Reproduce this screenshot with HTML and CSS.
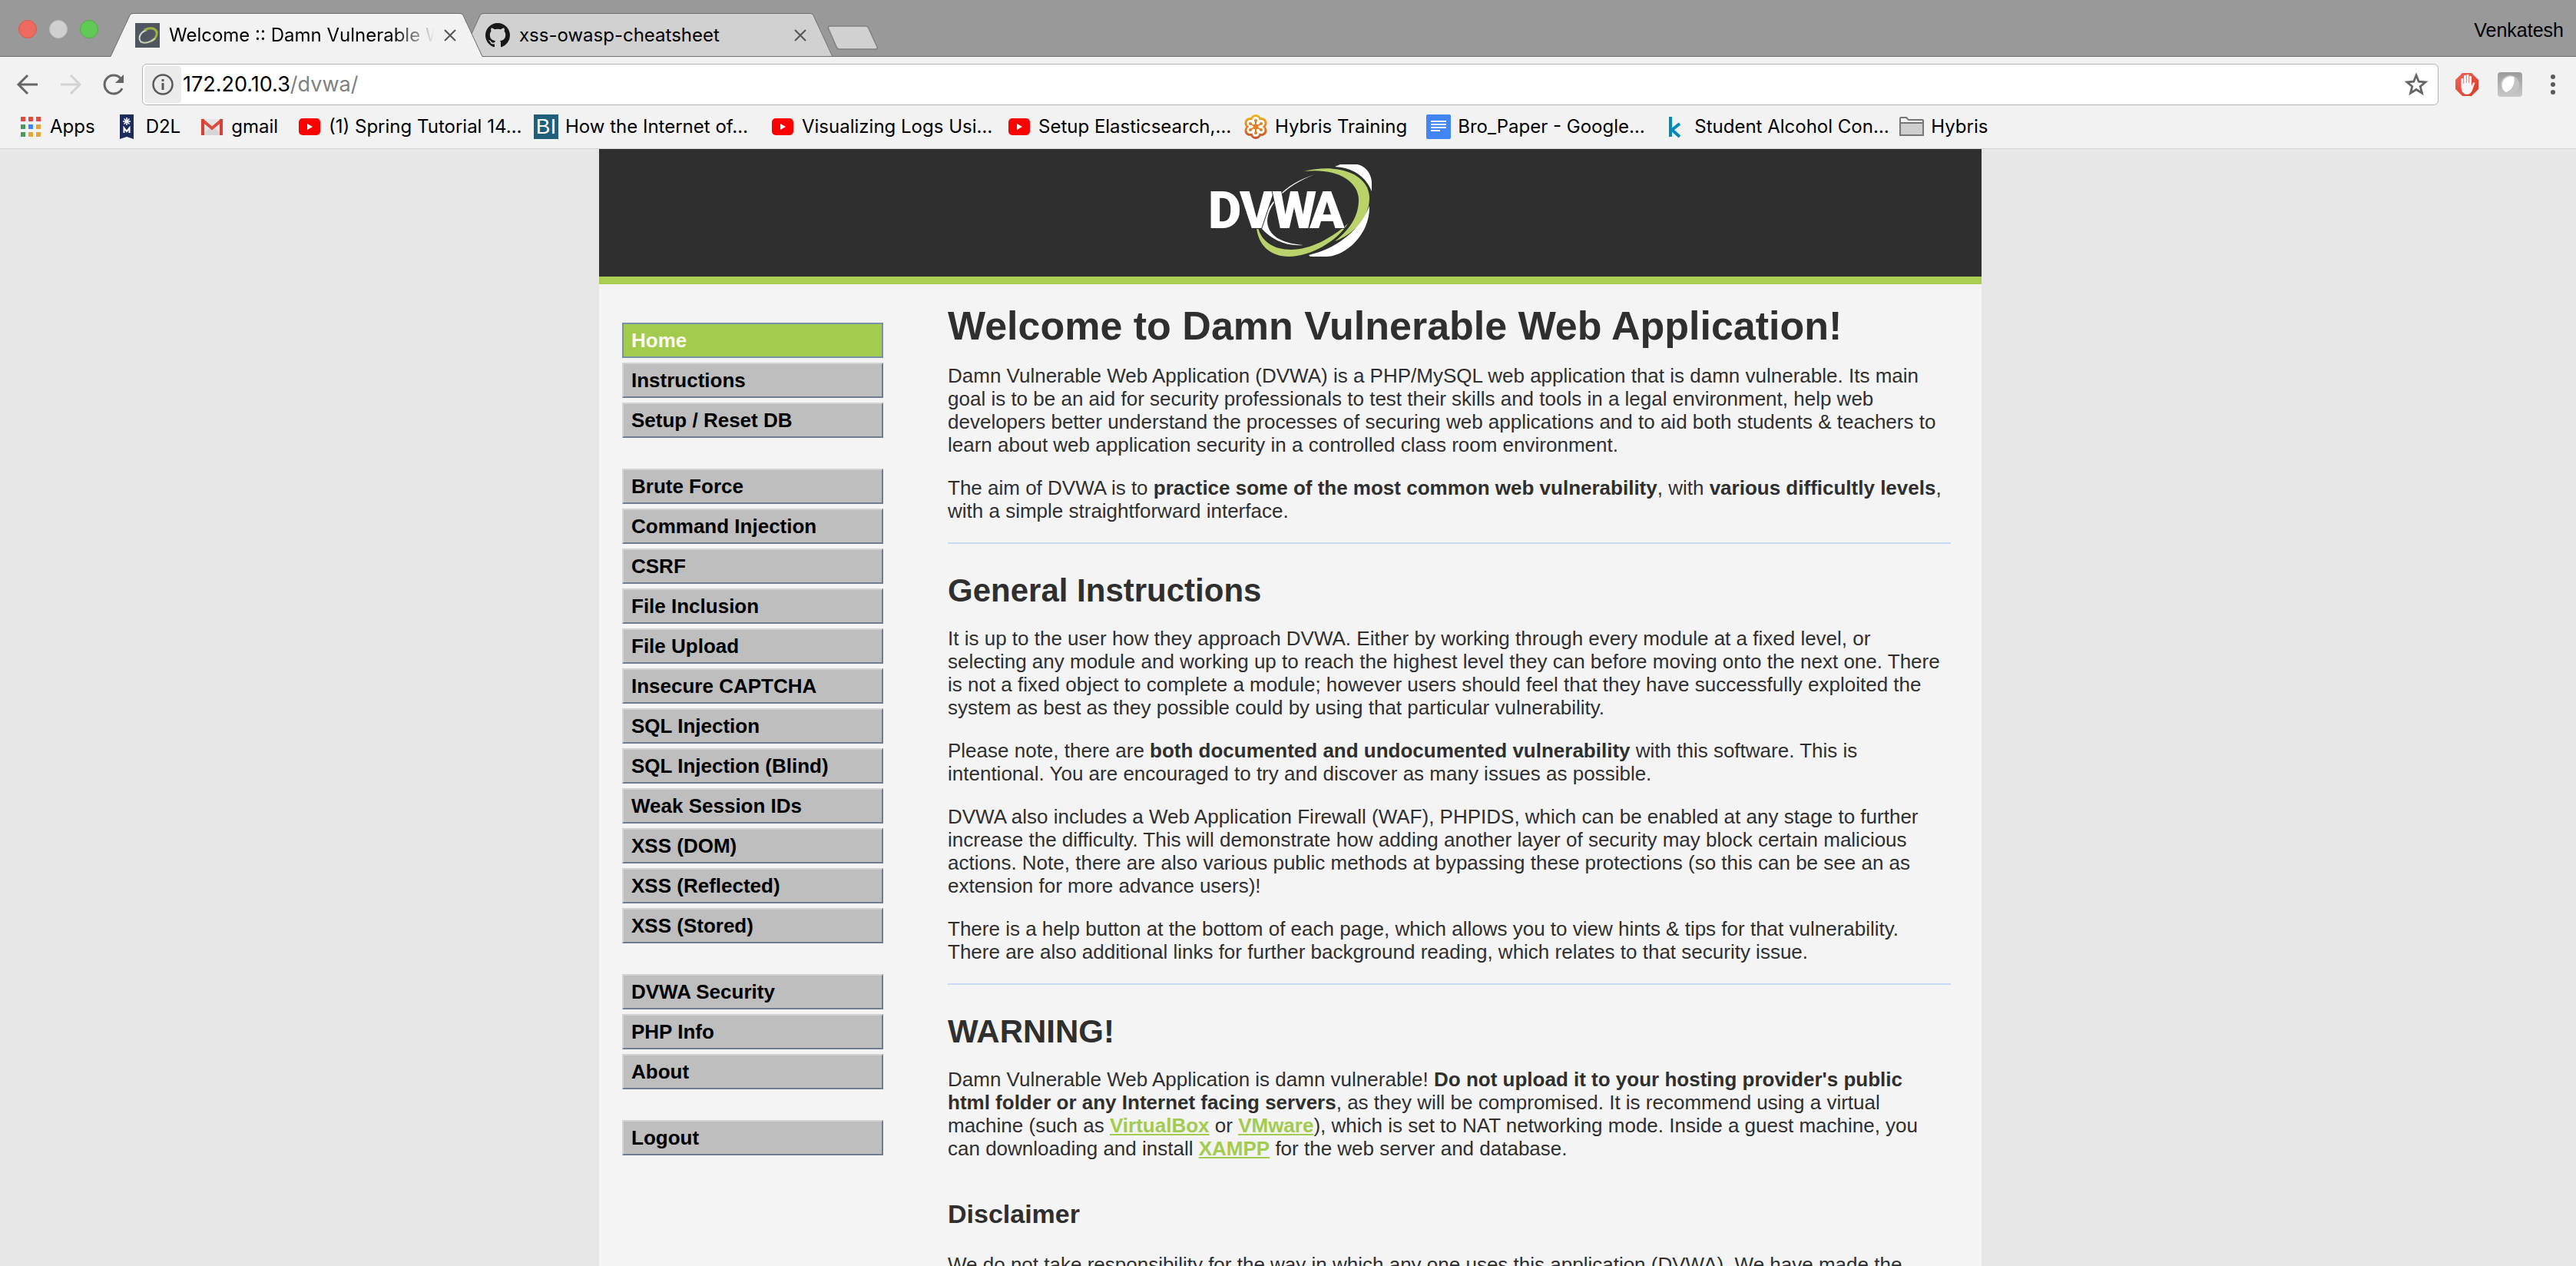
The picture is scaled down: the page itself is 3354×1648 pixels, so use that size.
FILE: index.html
```html
<!DOCTYPE html>
<html lang="en">
<head>
<meta charset="utf-8">
<title>Welcome :: Damn Vulnerable Web Application</title>
<link rel="stylesheet" href="styles.css">
</head>
<body>
<svg class="defs" aria-hidden="true">
  <defs>
    <symbol id="close" viewBox="0 0 16 16"><path d="M1 1L15 15M15 1L1 15" stroke="#555" stroke-width="2" fill="none"/></symbol>
    <symbol id="youtube" viewBox="0 0 32 32"><rect x="2" y="5" width="28" height="22" rx="5" fill="#f00"/><path d="M13 12L20 16L13 20Z" fill="#fff"/></symbol>
    <linearGradient id="orange" x1="0" y1="0" x2="0" y2="32" gradientUnits="userSpaceOnUse"><stop offset="0" stop-color="#f0b51e"/><stop offset="1" stop-color="#c8502d"/></linearGradient>
    <linearGradient id="red" x1="0" y1="0" x2="1" y2="1"><stop offset="0" stop-color="#f0655a"/><stop offset="1" stop-color="#d63a25"/></linearGradient>
    <linearGradient id="grey" x1="0" y1="0" x2="0" y2="1"><stop offset="0" stop-color="#9a9a9a"/><stop offset="1" stop-color="#c9c9c9"/></linearGradient>
  </defs>
</svg>

<header class="chrome">
  <div class="tabstrip">
    <div class="lights"><span class="light red"></span><span class="light idle"></span><span class="light green"></span></div>
    <div class="tab active">
      <svg class="tab-shape" viewBox="0 0 484 57"><path d="M0 57L25 3Q26 1 29 1H455Q458 1 459 3L484 57Z" fill="#f2f2f2"/><path d="M0 56.500L25 3Q26 .5 29 .5H455Q458 .5 459 3L484 56.500" fill="none" stroke="#6f6f6f"/></svg>
      <svg class="icon" viewBox="0 0 32 32"><rect width="32" height="32" fill="#50565f"/><path d="M8 25C3 20 6 12 15 9" fill="none" stroke="#d8dbd4" stroke-width="2"/><path d="M12 9C22 4 29 8 28 15C27 19 24 22 21 23" fill="none" stroke="#9cb045" stroke-width="3"/><path d="M7 24C12 28 22 24 26 20" fill="none" stroke="#c6cfae" stroke-width="2"/></svg>
      <span class="tab-title fade">Welcome :: Damn Vulnerable Web</span>
      <button class="tab-close" aria-label="Close tab"><svg width="16" height="16"><use href="#close"/></svg></button>
    </div>
    <div class="tab">
      <svg class="tab-shape" viewBox="0 0 484 57"><path d="M14 27L25 3Q26 1 29 1H455Q458 1 459 3L484 56H28Z" fill="#d1d1d1"/><path d="M14 27L25 3Q26 .5 29 .5H455Q458 .5 459 3L484 57" fill="none" stroke="#6f6f6f"/></svg>
      <svg class="icon" viewBox="0 0 16 16"><path fill="#191717" d="M8 0C3.580 0 0 3.580 0 8c0 3.540 2.290 6.530 5.470 7.590.4.070.55-.17.55-.38 0-.19-.01-.82-.01-1.490-2.010.37-2.530-.49-2.690-.94-.09-.23-.48-.94-.82-1.130-.28-.15-.68-.52-.01-.53.63-.01 1.080.58 1.230.82.72 1.210 1.870.87 2.330.66.070-.52.28-.87.51-1.070-1.780-.2-3.640-.89-3.640-3.950 0-.87.31-1.590.82-2.150-.08-.2-.36-1.020.08-2.120 0 0 .67-.21 2.200.82a7.600 7.600 0 0 1 4 0c1.530-1.040 2.200-.82 2.200-.82.44 1.100.16 1.920.08 2.120.51.56.82 1.270.82 2.150 0 3.070-1.870 3.750-3.650 3.950.29.25.54.73.54 1.480 0 1.070-.01 1.930-.01 2.200 0 .21.15.46.55.38A8 8 0 0 0 16 8c0-4.420-3.580-8-8-8z"/></svg>
      <span class="tab-title">xss-owasp-cheatsheet</span>
      <button class="tab-close" aria-label="Close tab"><svg width="16" height="16"><use href="#close"/></svg></button>
    </div>
    <button class="new-tab" aria-label="New tab"><svg width="68" height="34" viewBox="0 0 68 34"><path d="M4 1H50Q53 1 54 4L65 28Q66 31 63 31H16Q13 31 12 28L2 5Q0 1 4 1Z" fill="#d1d1d1" stroke="#808080" stroke-width="1.500"/></svg></button>
    <span class="profile">Venkatesh</span>
  </div>

  <div class="toolbar">
    <button class="tool" aria-label="Back"><svg width="32" height="32" viewBox="0 0 32 32"><path d="M29 16H5M16 4L4 16L16 28" fill="none" stroke="#666" stroke-width="3"/></svg></button>
    <button class="tool" aria-label="Forward"><svg width="32" height="32" viewBox="0 0 32 32"><path d="M3 16H27M16 4L28 16L16 28" fill="none" stroke="#d3d3d3" stroke-width="3"/></svg></button>
    <button class="tool" aria-label="Reload"><svg width="32" height="32" viewBox="0 0 32 32"><path d="M27 21A12 12 0 1 1 25 8" fill="none" stroke="#666" stroke-width="3"/><path d="M29 3V14H18Z" fill="#666"/></svg></button>
    <div class="omnibox">
      <span class="info"><svg width="30" height="30" viewBox="0 0 30 30"><circle cx="15" cy="15" r="12.500" fill="none" stroke="#5a5a5a" stroke-width="2.500"/><path d="M15 13V22M15 8V11" stroke="#5a5a5a" stroke-width="3"/></svg></span>
      <span class="url">172.20.10.3<span class="path">/dvwa/</span></span>
      <button class="tool" aria-label="Bookmark this page"><svg width="32" height="32" viewBox="0 0 32 32"><path d="M16 4L19.300 12.200L28 12.800L21.300 18.500L23.500 27.200L16 22.500L8.500 27.200L10.700 18.500L4 12.800L12.700 12.200Z" fill="none" stroke="#666" stroke-width="2.800"/></svg></button>
    </div>
    <button class="tool" aria-label="Ad blocker"><svg width="32" height="32" viewBox="0 0 32 32"><path d="M10 1H22L31 10V22L22 31H10L1 22V10Z" fill="url(#red)"/><path d="M8.500 19V8.500Q10 7 11.500 8.500V15H12V4.500Q13.500 3 15 4.500V14H15.500V3.500Q17 2 18.500 3.500V14H19V5.500Q20.500 4 22 5.500V18L23.500 14.500Q25 12.500 26.500 13.500L23.500 22Q21.500 29 16 29Q8.500 28.500 8.500 19Z" fill="#f7f7f7"/><path d="M11.800 8V15M15.300 5V14M18.800 5V14" stroke="#e0897f" stroke-width=".8"/></svg></button>
    <button class="tool" aria-label="Extension"><svg width="32" height="32" viewBox="0 0 32 32"><rect width="32" height="32" rx="4" fill="url(#grey)"/><circle cx="16" cy="16" r="12" fill="#c4c4c4"/><path d="M6 20C4 10 12 4 21 6C24 14 18 24 11 26Q7 24 6 20Z" fill="#fff"/></svg></button>
    <button class="tool" aria-label="Menu"><svg width="32" height="32" viewBox="0 0 32 32"><circle cx="16" cy="6" r="3" fill="#5a5a5a"/><circle cx="16" cy="16" r="3" fill="#5a5a5a"/><circle cx="16" cy="26" r="3" fill="#5a5a5a"/></svg></button>
  </div>

  <nav class="bookmarks" aria-label="Bookmarks">
    <a href="#"><svg class="icon" viewBox="0 0 32 32"><path d="M3 3h6v6H3zM13 3h6v6h-6zM23 3h6v6h-6z" fill="#e04a3f"/><path d="M3 13h6v6H3zM3 23h6v6H3z" fill="#4c9a5b"/><path d="M13 13h6v6h-6z" fill="#4285f4"/><path d="M23 13h6v6h-6zM13 23h6v6h-6zM23 23h6v6h-6z" fill="#e5a53a"/></svg>Apps</a>
    <a href="#"><svg class="icon" viewBox="0 0 32 32"><path d="M7 0H25V32L16 29L7 32Z" fill="#1c2b5c"/><path d="M16 4V14M11 9H21M12.500 5.500L19.500 12.500M19.500 5.500L12.500 12.500" stroke="#fff" stroke-width="1.500"/><path d="M12.500 24V17.500L16 22L19.500 17.500V24" fill="none" stroke="#fff" stroke-width="2"/></svg>D2L</a>
    <a href="#"><svg class="icon" viewBox="0 0 32 32"><path d="M2 6H30V27H2Z" fill="#e6e6e6"/><path d="M2 27L16 15L30 27Z" fill="#d6d6d6"/><path d="M3 7L16 18L29 7" fill="none" stroke="#dd4b3e" stroke-width="4"/><path d="M2 6H6V27H2ZM26 6H30V27H26Z" fill="#d54235"/></svg>gmail</a>
    <a class="long" href="#"><svg class="icon"><use href="#youtube"/></svg>(1) Spring Tutorial 14…</a>
    <a class="long" href="#"><span class="icon bi">BI</span>How the Internet of…</a>
    <a class="long" href="#"><svg class="icon"><use href="#youtube"/></svg>Visualizing Logs Usi…</a>
    <a class="long" href="#"><svg class="icon"><use href="#youtube"/></svg>Setup Elasticsearch,…</a>
    <a href="#"><svg class="icon" viewBox="0 0 32 32"><g fill="url(#orange)"><circle cx="16" cy="7" r="7"/><circle cx="8.500" cy="11" r="7"/><circle cx="23.500" cy="11" r="7"/><circle cx="8.500" cy="21" r="7"/><circle cx="23.500" cy="21" r="7"/><circle cx="16" cy="25" r="7"/></g><g fill="#fff"><circle cx="16" cy="16" r="9"/><circle cx="16" cy="7.500" r="4.500"/><circle cx="9" cy="11.500" r="4.500"/><circle cx="23" cy="11.500" r="4.500"/><circle cx="9" cy="20.500" r="4.500"/><circle cx="23" cy="20.500" r="4.500"/><circle cx="16" cy="24.500" r="4.500"/></g><path d="M16 8V24M9 12L23 20M23 12L9 20" stroke="#df7e24" stroke-width="2"/><g fill="#df7e24"><circle cx="16" cy="16" r="3.500"/><circle cx="16" cy="8" r="2"/><circle cx="9" cy="12" r="2"/><circle cx="23" cy="12" r="2"/><circle cx="9" cy="20" r="2"/><circle cx="23" cy="20" r="2"/><circle cx="16" cy="24" r="2"/></g></svg>Hybris Training</a>
    <a class="long" href="#"><svg class="icon" viewBox="0 0 32 32"><rect width="32" height="32" rx="2" fill="#4285f4"/><path d="M6 9H26M6 13H26M6 17H26M6 21H18" stroke="#fff" stroke-width="2"/></svg>Bro_Paper - Google…</a>
    <a class="long" href="#"><svg class="icon" viewBox="0 0 32 32"><path d="M10 3V29M22 12L12 20L22 29" fill="none" stroke="#008abc" stroke-width="4"/></svg>Student Alcohol Con…</a>
    <a href="#"><svg class="icon" viewBox="0 0 32 32"><path d="M1 27V5Q1 4 2 4H9L12 7H30Q31 7 31 8V27Z" fill="#f2f2f2" stroke="#767676" stroke-width="2"/><path d="M1 11H31V27H1Z" fill="#cfcfcf" stroke="#767676" stroke-width="2"/></svg>Hybris</a>
  </nav>
</header>

<div class="viewport">
  <div class="container">
    <div class="banner">
      <svg class="logo" width="210" height="120" viewBox="0 0 210 120" role="img" aria-label="DVWA">
        <path fill="#fff" d="M136 13C100 24 72 50 66 83C80 98 98 107 121 105C92 103 74 92 74 73C76 50 98 28 136 13Z"/>
        <path fill="#b9d36a" d="M122 9C165 -2 207 12 207 44C207 70 185 92 162 100C185 82 193 64 193 46C193 22 165 4 122 9Z"/>
        <path fill="#b9d36a" d="M60 82C62 105 78 120 102 120C130 120 165 100 179 77C158 96 130 111 105 111C82 111 66 100 62 82Z"/>
        <path fill="#fff" d="M162 3L169 0H191C203 2 210 14 210 24V35C203 18 188 4 162 3Z"/>
        <path fill="#fff" d="M207 54C208 92 175 120 151 120H130L128 118C165 110 196 84 207 54Z"/>
        <text class="logo-text" y="83" x="-3 38 80 129">DVWA</text>
      </svg>
    </div>
    <div class="columns">
      <nav class="menu" aria-label="Main menu">
        <ul>
          <li><a class="selected" href="#">Home</a></li>
          <li><a href="#">Instructions</a></li>
          <li><a href="#">Setup / Reset DB</a></li>
        </ul>
        <ul>
          <li><a href="#">Brute Force</a></li>
          <li><a href="#">Command Injection</a></li>
          <li><a href="#">CSRF</a></li>
          <li><a href="#">File Inclusion</a></li>
          <li><a href="#">File Upload</a></li>
          <li><a href="#">Insecure CAPTCHA</a></li>
          <li><a href="#">SQL Injection</a></li>
          <li><a href="#">SQL Injection (Blind)</a></li>
          <li><a href="#">Weak Session IDs</a></li>
          <li><a href="#">XSS (DOM)</a></li>
          <li><a href="#">XSS (Reflected)</a></li>
          <li><a href="#">XSS (Stored)</a></li>
        </ul>
        <ul>
          <li><a href="#">DVWA Security</a></li>
          <li><a href="#">PHP Info</a></li>
          <li><a href="#">About</a></li>
        </ul>
        <ul>
          <li><a href="#">Logout</a></li>
        </ul>
      </nav>
      <main class="content">
        <h1>Welcome to Damn Vulnerable Web Application!</h1>
        <p>Damn Vulnerable Web Application (DVWA) is a PHP/MySQL web application that is damn vulnerable. Its main goal is to be an aid for security professionals to test their skills and tools in a legal environment, help web developers better understand the processes of securing web applications and to aid both students &amp; teachers to learn about web application security in a controlled class room environment.</p>
        <p>The aim of DVWA is to <strong>practice some of the most common web vulnerability</strong>, with <strong>various difficultly levels</strong>, with a simple straightforward interface.</p>
        <hr>
        <h2>General Instructions</h2>
        <p>It is up to the user how they approach DVWA. Either by working through every module at a fixed level, or selecting any module and working up to reach the highest level they can before moving onto the next one. There is not a fixed object to complete a module; however users should feel that they have successfully exploited the system as best as they possible could by using that particular vulnerability.</p>
        <p>Please note, there are <strong>both documented and undocumented vulnerability</strong> with this software. This is intentional. You are encouraged to try and discover as many issues as possible.</p>
        <p>DVWA also includes a Web Application Firewall (WAF), PHPIDS, which can be enabled at any stage to further increase the difficulty. This will demonstrate how adding another layer of security may block certain malicious actions. Note, there are also various public methods at bypassing these protections (so this can be see an as extension for more advance users)!</p>
        <p>There is a help button at the bottom of each page, which allows you to view hints &amp; tips for that vulnerability. There are also additional links for further background reading, which relates to that security issue.</p>
        <hr>
        <h2>WARNING!</h2>
        <p>Damn Vulnerable Web Application is damn vulnerable! <strong>Do not upload it to your hosting provider's public html folder or any Internet facing servers</strong>, as they will be compromised. It is recommend using a virtual machine (such as <a href="#">VirtualBox</a> or <a href="#">VMware</a>), which is set to NAT networking mode. Inside a guest machine, you can downloading and install <a href="#">XAMPP</a> for the web server and database.</p>
        <h3>Disclaimer</h3>
        <p>We do not take responsibility for the way in which any one uses this application (DVWA). We have made the</p>
      </main>
    </div>
  </div>
</div>
</body>
</html>
```

FILE: styles.css
```css
* { box-sizing: border-box; }

body {
  margin: 0;
  height: 100vh;
  display: flex;
  flex-direction: column;
  overflow: hidden;
  background: #e7e7e7;
  color: #2f2f2f;
  font: 26px/30px "Liberation Sans", Arial, sans-serif;
}

button {
  padding: 0;
  border: 0;
  background: none;
}

svg { display: block; }
.defs { position: absolute; width: 0; height: 0; }
.icon { width: 32px; height: 32px; flex: none; }

/* Browser window */
.chrome {
  flex: none;
  background: #f2f2f2;
  border-bottom: 1px solid #d3d3d3;
  color: #000;
  font: 24px/32px Inter, sans-serif;
}

.tabstrip {
  display: flex;
  height: 74px;
  padding-top: 17px;
  background: #999;
  border-bottom: 1px solid #6f6f6f;
}

.lights {
  display: flex;
  gap: 16px;
  width: 144px;
  padding: 9px 0 0 24px;
}
.light { width: 24px; height: 24px; border-radius: 50%; border: 1px solid; }
.light.red { background: #ee6a5f; border-color: #d9584d; }
.light.idle { background: #d0d0d0; border-color: #bdbdbd; }
.light.green { background: #61c955; border-color: #4fae45; }

.tab {
  position: relative;
  display: flex;
  align-items: center;
  gap: 12px;
  width: 484px;
  height: 57px;
  padding: 0 34px 0 32px;
}
.tab + .tab { margin-left: -28px; }
.tab.active { z-index: 1; }
.tab-shape { position: absolute; inset: 0; width: 484px; height: 57px; }
.tab .icon, .tab-title, .tab-close { position: relative; }
.tab-title { flex: 1; overflow: hidden; white-space: nowrap; }
.tab-title.fade { -webkit-mask-image: linear-gradient(to right, #000 84%, transparent); mask-image: linear-gradient(to right, #000 84%, transparent); }

.new-tab { align-self: flex-start; margin: 16px 0 0 -7px; }
.profile { margin-left: auto; padding: 6px 16px 0 0; font: 25px/32px "Liberation Sans", Arial, sans-serif; }

.toolbar {
  display: flex;
  align-items: center;
  gap: 24px;
  padding: 9px 14px 7px 20px;
}
.omnibox {
  flex: 1;
  display: flex;
  align-items: center;
  height: 54px;
  margin: 0 -3px;
  padding: 0 12px 0 2px;
  background: #fff;
  border: 1px solid #b4b4b4;
  border-radius: 6px;
}
.info {
  display: flex;
  align-items: center;
  justify-content: center;
  width: 48px;
  height: 48px;
  margin-right: 2px;
  background: #ebebeb;
  border-radius: 4px;
}
.url { flex: 1; font-size: 27px; }
.path { color: #808080; }

.bookmarks {
  display: flex;
  gap: 25px;
  padding: 5px 24px 12px;
}
.bookmarks a {
  display: flex;
  align-items: center;
  gap: 9px;
  white-space: nowrap;
  color: inherit;
  text-decoration: none;
}
.bookmarks .long { width: 283px; }
.bi { background: #1f5f7a; color: #fff; font: 28px/32px "Liberation Sans", Arial, sans-serif; text-align: center; }

/* Web page */
.viewport { flex: 1; display: flex; justify-content: center; padding-left: 6px; overflow: hidden; }
.container { width: 100%; max-width: 1800px; background: #f4f4f4; }

.banner {
  display: flex;
  justify-content: center;
  padding: 20px 0 26px 2px;
  background: #2f2f2f;
  border-bottom: 10px solid #a8cd50;
}
.logo-text {
  font: 900 67px Roboto, sans-serif;
  fill: #fff;
  stroke: #2f2f2f;
  stroke-width: 2px;
  paint-order: stroke;
}

.columns { display: flex; gap: 84px; padding: 24px 40px 0 30px; }

.menu { flex: none; width: 340px; padding-top: 26px; }
.menu ul { display: flex; flex-direction: column; gap: 6px; margin: 0 0 40px; padding: 0; list-style: none; }
.menu a {
  display: block;
  padding-left: 10px;
  border: 2px solid;
  border-color: #d3d3d3 #6f7b90 #6f7b90 #d3d3d3;
  background: #bebebe;
  color: #000;
  font-weight: bold;
  line-height: 42px;
  text-decoration: none;
}
.menu a.selected { background: #a3cb4d; border-color: #788fae; color: #fbf8ee; }

.content { flex: 1; }
.content h1 { margin: 0 0 20px; font-size: 52px; line-height: 60px; }
.content h2 { margin: 36px 0 22px; font-size: 42px; line-height: 50px; }
.content h3 { margin: 50px 0 31px; font-size: 34px; line-height: 40px; }
.content p { margin: 0 0 26px; padding-right: 10px; }
.content hr { height: 2px; margin: 26px 0 0; border: 0; background: #c8d9fa; }
.content a { color: #a3cb4d; font-weight: bold; }
```
